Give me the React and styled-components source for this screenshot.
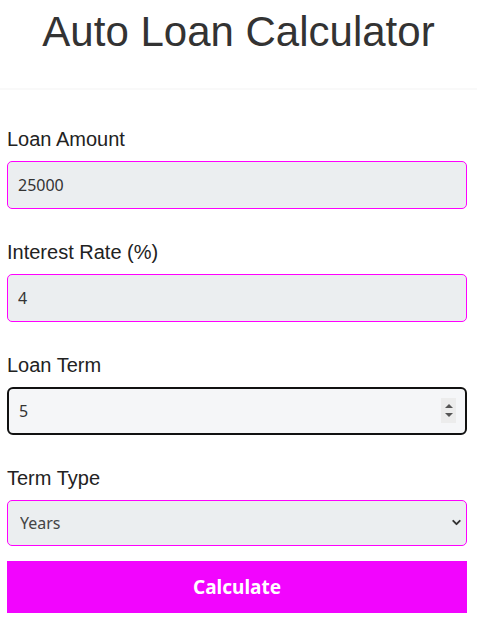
import styled, { createGlobalStyle } from "styled-components";
import { ChevronDown } from "lucide-react";

const GlobalStyle = createGlobalStyle`
  body {
    margin: 0;
    background: #fff;
    font-family: "Liberation Sans", Arial, sans-serif;
  }
`;

const App = () => {
  return (
    <>
      <GlobalStyle />
      <Header>
        <h1>Auto Loan Calculator</h1>
      </Header>

      <Form onSubmit={(e) => e.preventDefault()}>
        <Group>
          <Label>Loan Amount</Label>
          <Input defaultValue="25000" />
        </Group>
        <Group>
          <Label>Interest Rate (%)</Label>
          <Input defaultValue="4" />
        </Group>
        <Group>
          <Label>Loan Term</Label>
          <Field>
            <Input $focused defaultValue="5" />
            <Spinner>
              <span className="up" />
              <span className="down" />
            </Spinner>
          </Field>
        </Group>
        <Group>
          <Label>Term Type</Label>
          <Field>
            <Select defaultValue="years">
              <option value="years">Years</option>
              <option value="months">Months</option>
            </Select>
            <Chevron>
              <ChevronDown size={13} strokeWidth={3.5} />
            </Chevron>
          </Field>
        </Group>
        <Button type="submit">Calculate</Button>
      </Form>
    </>
  );
};

export default App;

const Header = styled.header`
  height: 88px;
  border-bottom: 2px solid #f9f9f9;
  text-align: center;

  h1 {
    margin: 0;
    padding-top: 8px;
    font-size: 42px;
    font-weight: 400;
    color: #333;
  }
`;

const Form = styled.form`
  width: 460px;
  margin-left: 7px;
  padding-top: 37px;
  display: flex;
  flex-direction: column;
`;

const Group = styled.div`
  display: flex;
  flex-direction: column;
  margin-bottom: 31px;

  &:nth-of-type(4) {
    margin-bottom: 15px;
  }
`;

const Label = styled.label`
  font-size: 20px;
  line-height: 24px;
  color: #222;
  margin-bottom: 10px;
`;

const Field = styled.div`
  position: relative;
`;

const Input = styled.input`
  box-sizing: border-box;
  width: 100%;
  height: 48px;
  padding: 0 10px;
  font-family: "Noto Sans", "Open Sans", sans-serif;
  font-size: 16px;
  color: #333;
  background: ${(p) => (p.$focused ? "#f5f6f8" : "#ebeef0")};
  border: ${(p) => (p.$focused ? "2px solid #111" : "1px solid #f0f")};
  border-radius: ${(p) => (p.$focused ? "6px" : "5px")};
  outline: none;
`;

const Spinner = styled.span`
  position: absolute;
  right: 11px;
  top: 11px;
  width: 15px;
  height: 25px;
  background: #ececec;
  display: flex;
  flex-direction: column;
  align-items: center;
  justify-content: center;
  gap: 5px;

  span {
    width: 0;
    height: 0;
    border-left: 4px solid transparent;
    border-right: 4px solid transparent;
  }
  .up {
    border-bottom: 4px solid #555;
  }
  .down {
    border-top: 4px solid #555;
  }
`;

const Select = styled.select`
  box-sizing: border-box;
  width: 100%;
  height: 46px;
  padding: 0 12px;
  font-family: "Noto Sans", "Open Sans", sans-serif;
  font-size: 16px;
  color: #444;
  background: #ebeef0;
  border: 1px solid #f0f;
  border-radius: 5px;
  appearance: none;
  outline: none;
`;

const Chevron = styled.span`
  position: absolute;
  right: 4px;
  top: 16px;
  color: #333;
  display: flex;
  pointer-events: none;
`;

const Button = styled.button`
  height: 52px;
  border: none;
  background: #f205fe;
  color: #fff;
  font-family: "Noto Sans", "Open Sans", sans-serif;
  font-size: 19px;
  font-weight: 700;
  cursor: pointer;
`;
